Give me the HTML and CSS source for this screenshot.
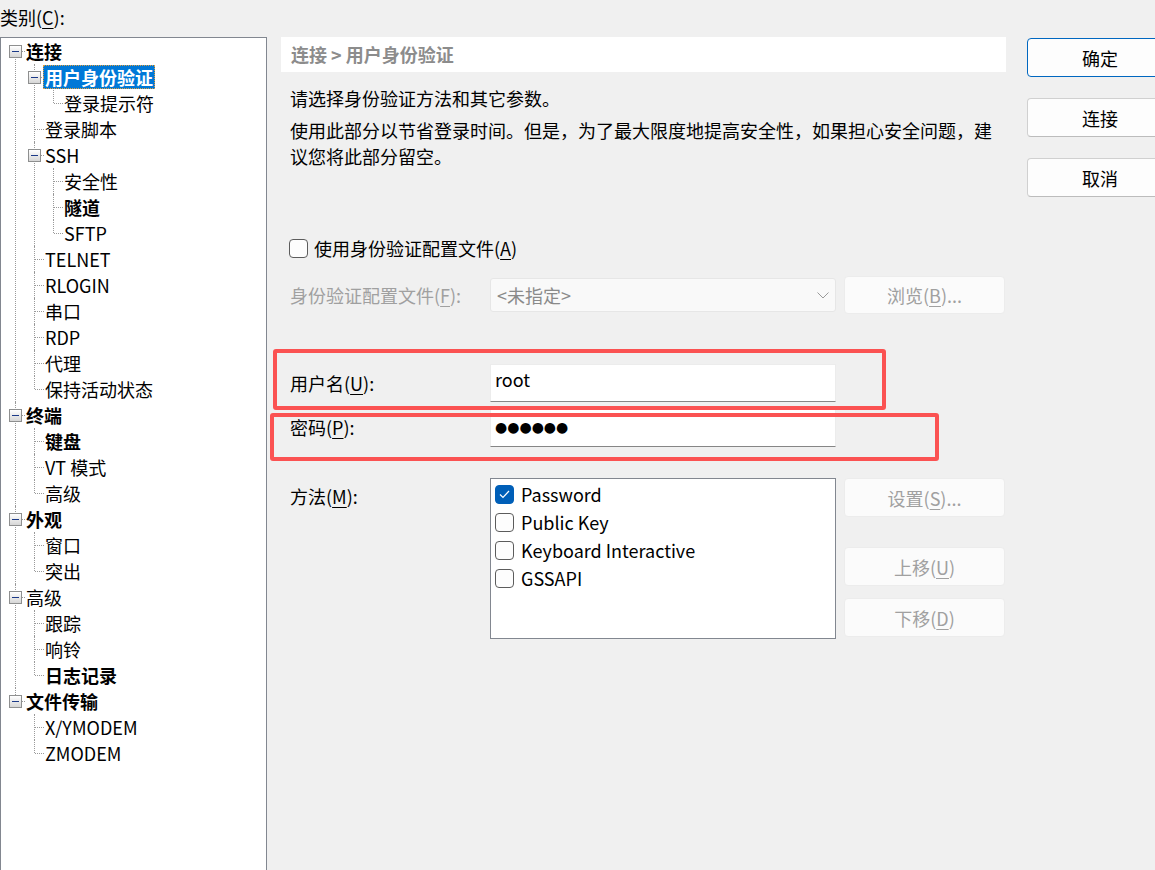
FILE: index.html
```html
<!DOCTYPE html>
<html lang="zh-CN">
<head>
  <meta charset="UTF-8">
  <title>会话属性</title>
  <link rel="stylesheet" href="styles.css">
</head>
<body>
  <div class="dialog">

    <!-- Category tree -->
    <div class="left">
      <div class="cat-label">类别(<u>C</u>):</div>
      <div class="tree">
        <ul class="tree-root">
          <li>
            <div class="row"><span class="exp"></span><span class="txt b">连接</span></div>
            <ul>
              <li>
                <div class="row"><span class="exp"></span><span class="txt b sel">用户身份验证</span></div>
                <ul>
                  <li class="last"><div class="row"><span class="txt">登录提示符</span></div></li>
                </ul>
              </li>
              <li><div class="row"><span class="txt">登录脚本</span></div></li>
              <li>
                <div class="row"><span class="exp"></span><span class="txt">SSH</span></div>
                <ul>
                  <li><div class="row"><span class="txt">安全性</span></div></li>
                  <li><div class="row"><span class="txt b">隧道</span></div></li>
                  <li class="last"><div class="row"><span class="txt">SFTP</span></div></li>
                </ul>
              </li>
              <li><div class="row"><span class="txt">TELNET</span></div></li>
              <li><div class="row"><span class="txt">RLOGIN</span></div></li>
              <li><div class="row"><span class="txt">串口</span></div></li>
              <li><div class="row"><span class="txt">RDP</span></div></li>
              <li><div class="row"><span class="txt">代理</span></div></li>
              <li class="last"><div class="row"><span class="txt">保持活动状态</span></div></li>
            </ul>
          </li>
          <li>
            <div class="row"><span class="exp"></span><span class="txt b">终端</span></div>
            <ul>
              <li><div class="row"><span class="txt b">键盘</span></div></li>
              <li><div class="row"><span class="txt">VT 模式</span></div></li>
              <li class="last"><div class="row"><span class="txt">高级</span></div></li>
            </ul>
          </li>
          <li>
            <div class="row"><span class="exp"></span><span class="txt b">外观</span></div>
            <ul>
              <li><div class="row"><span class="txt">窗口</span></div></li>
              <li class="last"><div class="row"><span class="txt">突出</span></div></li>
            </ul>
          </li>
          <li>
            <div class="row"><span class="exp"></span><span class="txt">高级</span></div>
            <ul>
              <li><div class="row"><span class="txt">跟踪</span></div></li>
              <li><div class="row"><span class="txt">响铃</span></div></li>
              <li class="last"><div class="row"><span class="txt b">日志记录</span></div></li>
            </ul>
          </li>
          <li class="last">
            <div class="row"><span class="exp"></span><span class="txt b">文件传输</span></div>
            <ul>
              <li><div class="row"><span class="txt">X/YMODEM</span></div></li>
              <li class="last"><div class="row"><span class="txt">ZMODEM</span></div></li>
            </ul>
          </li>
        </ul>
      </div>
    </div>

    <!-- Page content -->
    <div class="middle">
      <div class="crumb">连接 &gt; 用户身份验证</div>
      <p class="note">请选择身份验证方法和其它参数。</p>
      <p class="note note-2">使用此部分以节省登录时间。但是，为了最大限度地提高安全性，如果担心安全问题，建议您将此部分留空。</p>

      <div class="check-row">
        <span class="check"></span>
        <span>使用身份验证配置文件(<u>A</u>)</span>
      </div>

      <div class="form-row profile">
        <div class="lbl disabled">身份验证配置文件(<u>F</u>):</div>
        <div class="combo">
          <span>&lt;未指定&gt;</span>
          <svg class="chev" width="12" height="7" viewBox="0 0 12 7"><polyline points="0.5,0.5 6,6 11.5,0.5" fill="none" stroke="#9a9a9a" stroke-width="1"/></svg>
        </div>
        <button class="btn side">浏览(<u>B</u>)...</button>
      </div>

      <div class="form-row user">
        <div class="lbl">用户名(<u>U</u>):</div>
        <div class="field">root</div>
      </div>

      <div class="form-row pass">
        <div class="lbl">密码(<u>P</u>):</div>
        <div class="field"><span class="dots">●●●●●●</span></div>
      </div>

      <div class="form-row method">
        <div class="lbl">方法(<u>M</u>):</div>
        <div class="listbox">
          <div class="item"><span class="check on"><svg width="11" height="9" viewBox="0 0 11 9"><polyline points="1,4.5 4,7.5 10,1" fill="none" stroke="#fff" stroke-width="1.2"/></svg></span>Password</div>
          <div class="item"><span class="check"></span>Public Key</div>
          <div class="item"><span class="check"></span>Keyboard Interactive</div>
          <div class="item"><span class="check"></span>GSSAPI</div>
        </div>
        <div class="side-col">
          <button class="btn side">设置(<u>S</u>)...</button>
          <button class="btn side up">上移(<u>U</u>)</button>
          <button class="btn side">下移(<u>D</u>)</button>
        </div>
      </div>

      <!-- annotation frames -->
      <div class="mark mark-user"></div>
      <div class="mark mark-pass"></div>
    </div>

    <!-- Dialog buttons -->
    <div class="right">
      <button class="btn main default">确定</button>
      <button class="btn main">连接</button>
      <button class="btn main">取消</button>
    </div>

  </div>
</body>
</html>
```

FILE: styles.css
```css
* {
  box-sizing: border-box;
}

html, body {
  margin: 0;
  padding: 0;
  height: 100%;
  overflow: hidden;
}

body {
  font-family: "Noto Sans CJK SC", sans-serif;
  font-size: 18px;
  color: #000;
  background-color: #f0f0f0;
}

u {
  text-decoration-thickness: 1px;
  text-underline-offset: 3px;
}

.dialog {
  display: flex;
  align-items: flex-start;
}

/* left: category tree */
.left {
  width: 267px;
  flex-shrink: 0;
}

.cat-label {
  height: 37px;
  line-height: 34px;
}

.tree {
  height: 860px;
  background-color: #fff;
  border: 1px solid #828790;
}

.tree ul {
  list-style: none;
  margin: 0;
  padding: 0;
}

.tree ul ul {
  margin-left: 19px;
}

.tree li {
  position: relative;
}

.tree li::before {
  content: "";
  position: absolute;
  left: 14px;
  top: 0;
  bottom: 0;
  border-left: 1px dotted #9a9a9a;
}

.tree li.last::before {
  bottom: auto;
  height: 13px;
}

.tree-root > li:first-child::before {
  top: 13px;
}

.tree li::after {
  content: "";
  position: absolute;
  left: 15px;
  top: 13px;
  width: 9px;
  border-top: 1px dotted #9a9a9a;
}

.row {
  position: relative;
  height: 26px;
  line-height: 26px;
  padding-left: 25px;
  white-space: nowrap;
}

.exp {
  position: absolute;
  left: 8px;
  top: 7px;
  width: 13px;
  height: 13px;
  border: 1px solid #8e8f8f;
  background: linear-gradient(#ffffff, #d6d6d6);
  z-index: 1;
}

.exp::before {
  content: "";
  position: absolute;
  left: 2px;
  top: 5px;
  width: 7px;
  height: 1px;
  background-color: #1c3a88;
}

.txt.b {
  font-weight: 700;
}

.txt.sel {
  display: inline-block;
  height: 24px;
  line-height: 22px;
  margin-left: -2px;
  margin-top: 1px;
  padding: 0 1px;
  color: #fff;
  background-color: #0078d7;
  border: 1px dotted #e0a040;
  vertical-align: top;
}

/* middle: page content */
.middle {
  position: relative;
  width: 725px;
  margin-left: 14px;
  padding-top: 37px;
  flex-shrink: 0;
}

.crumb {
  height: 35px;
  line-height: 35px;
  padding-left: 10px;
  background-color: #fff;
  color: #8c8c8c;
  font-weight: 700;
}

.note {
  margin: 13px 0 0;
  padding-left: 9px;
  line-height: 26px;
}

.note-2 {
  margin-top: 6px;
}

.check-row {
  display: flex;
  align-items: center;
  gap: 6px;
  height: 26px;
  margin-top: 66px;
  padding-left: 8px;
}

.check {
  display: inline-flex;
  align-items: center;
  justify-content: center;
  width: 19px;
  height: 19px;
  border: 1px solid #5c5c5c;
  border-radius: 4px;
  background-color: #fdfdfd;
  flex-shrink: 0;
}

.check.on {
  background-color: #005fb8;
  border-color: #005fb8;
}

.form-row {
  display: flex;
  align-items: center;
  padding-left: 9px;
}

.lbl {
  width: 200px;
  flex-shrink: 0;
  line-height: 26px;
}

.lbl.disabled {
  color: #a0a0a0;
}

.profile {
  margin-top: 15px;
}

.combo {
  display: flex;
  align-items: center;
  justify-content: space-between;
  width: 346px;
  height: 34px;
  padding: 0 6px;
  background-color: #f9f9f9;
  border: 1px solid #e6e6e6;
  border-radius: 3px;
  color: #8a8a8a;
}

.btn {
  font-family: inherit;
  font-size: 18px;
  border-radius: 4px;
  padding: 0;
  cursor: pointer;
}

.btn.side {
  width: 161px;
  height: 38px;
  margin-left: 8px;
  background-color: #fbfbfb;
  border: 1px solid #ececec;
  color: #a0a0a0;
}

.user {
  margin-top: 50px;
}

.pass {
  margin-top: 7px;
}

.pass .lbl {
  margin-top: -3px;
}

.field {
  width: 346px;
  height: 38px;
  padding: 1px 4px 0;
  line-height: 26px;
  background-color: #fff;
  border: 1px solid #ececec;
  border-bottom: 1px solid #868686;
}

.dots {
  display: inline-block;
  margin-top: 6px;
  font-family: "DejaVu Sans", sans-serif;
  font-size: 14px;
  line-height: 20px;
  vertical-align: top;
}

.method {
  align-items: flex-start;
  margin-top: 31px;
}

.method .lbl {
  padding-top: 5px;
}

.listbox {
  width: 346px;
  height: 161px;
  padding-top: 1px;
  padding-left: 4px;
  background-color: #fff;
  border: 1px solid #828790;
}

.item {
  display: flex;
  align-items: center;
  gap: 7px;
  height: 28px;
}

.side-col {
  display: flex;
  flex-direction: column;
}

.side-col .btn {
  height: 39px;
}

.side-col .up {
  margin-top: 30px;
  margin-bottom: 12px;
}

.mark {
  position: absolute;
  border: 4px solid #fb5252;
  border-radius: 3px;
}

.mark-user {
  left: -8px;
  top: 349px;
  width: 613px;
  height: 61px;
}

.mark-pass {
  left: -11px;
  top: 413px;
  width: 669px;
  height: 48px;
}

/* right: dialog buttons */
.right {
  display: flex;
  flex-direction: column;
  gap: 21px;
  margin-left: 21px;
  padding-top: 38px;
  flex-shrink: 0;
}

.btn.main {
  width: 146px;
  height: 39px;
  background-color: #fdfdfd;
  border: 1px solid #d0d0d0;
  border-bottom-color: #bcbcbc;
  color: #000;
}

.btn.main.default {
  border: 1px solid #0067c0;
}
```
